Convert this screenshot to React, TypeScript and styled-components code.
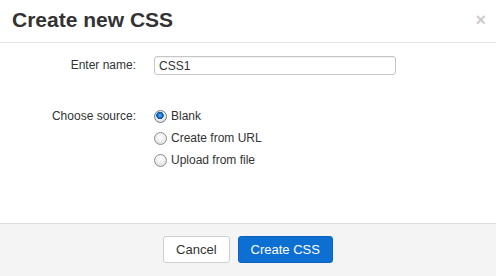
import React, { useState } from "react";
import { styled, createGlobalStyle } from "styled-components";

const GlobalStyle = createGlobalStyle`
  html, body {
    margin: 0;
    padding: 0;
    background: #fff;
  }
  body {
    font-family: "Liberation Sans", Arial, sans-serif;
    color: #333;
  }
`;

const Dialog = styled.div`
  width: 496px;
  height: 276px;
  display: flex;
  flex-direction: column;
  background: #fff;
`;

const Header = styled.div`
  height: 43px;
  padding: 0 10px 2px 12px;
  box-sizing: border-box;
  display: flex;
  align-items: center;
  justify-content: space-between;
  border-bottom: 1px solid #e5e5e5;
`;

const Title = styled.h3`
  margin: 0;
  font-size: 21px;
  font-weight: 700;
  color: #333;
`;

const Close = styled.button`
  border: 0;
  background: none;
  padding: 0;
  font-family: inherit;
  font-size: 18px;
  font-weight: 700;
  line-height: 1;
  color: #000;
  opacity: 0.2;
  cursor: pointer;
`;

const Body = styled.div`
  flex: 1;
  padding-top: 13px;
  display: grid;
  grid-template-columns: 136px 242px;
  column-gap: 18px;
  row-gap: 30px;
  align-content: start;
`;

const Label = styled.label<{ $top?: boolean }>`
  font-size: 12px;
  color: #333;
  text-align: right;
  line-height: ${(p) => (p.$top ? "22px" : "19px")};
`;

const TextInput = styled.input`
  box-sizing: border-box;
  width: 242px;
  height: 19px;
  margin: 0;
  padding: 0 4px;
  border: 1px solid #c6c6c6;
  border-radius: 3px;
  box-shadow: inset 0 1px 1px rgba(0, 0, 0, 0.06);
  font-family: inherit;
  font-size: 12px;
  color: #333;
  outline: none;
`;

const Options = styled.div`
  display: flex;
  flex-direction: column;
`;

const Option = styled.label`
  height: 22px;
  display: flex;
  align-items: center;
  gap: 4px;
  font-size: 12px;
  color: #333;
  cursor: pointer;
`;

const Radio = styled.input`
  appearance: none;
  -webkit-appearance: none;
  margin: 0;
  width: 13px;
  height: 13px;
  border-radius: 50%;
  border: 1px solid #8f8f8f;
  box-sizing: border-box;
  background: radial-gradient(circle at 50% 35%, #ffffff 0, #f2f2f2 40%, #d4d4d4 100%);
  &:checked {
    border-color: #6b7f96;
    background:
      radial-gradient(circle at 45% 40%, #5fb4f5 0, #1f7ad6 2px, #0b4f9e 3.5px, transparent 4px),
      radial-gradient(circle at 50% 35%, #ffffff 0, #f2f2f2 40%, #d4d4d4 100%);
  }
`;

const Footer = styled.div`
  height: 53px;
  box-sizing: border-box;
  border-top: 1px solid #dcdcdc;
  background: #f4f4f4;
  display: flex;
  align-items: center;
  justify-content: center;
  gap: 8px;
  padding-bottom: 1px;
`;

const Button = styled.button<{ $primary?: boolean }>`
  height: 27px;
  padding: 0 12px;
  border-radius: 3px;
  font-family: inherit;
  font-size: 13px;
  cursor: pointer;
  border: 1px solid ${(p) => (p.$primary ? "#0b63bd" : "#cfcfcf")};
  background: ${(p) => (p.$primary ? "#0d6fd1" : "#fff")};
  color: ${(p) => (p.$primary ? "#fff" : "#333")};
`;

const sources = ["Blank", "Create from URL", "Upload from file"];

export default function App() {
  const [name, setName] = useState("CSS1");
  const [source, setSource] = useState("Blank");

  return (
    <>
      <GlobalStyle />
      <Dialog>
        <Header>
          <Title>Create new CSS</Title>
          <Close aria-label="Close">×</Close>
        </Header>
        <Body>
          <Label htmlFor="css-name">Enter name:</Label>
          <TextInput id="css-name" value={name} onChange={(e) => setName(e.target.value)} />
          <Label $top>Choose source:</Label>
          <Options>
            {sources.map((s) => (
              <Option key={s}>
                <Radio
                  type="radio"
                  name="source"
                  checked={source === s}
                  onChange={() => setSource(s)}
                />
                {s}
              </Option>
            ))}
          </Options>
        </Body>
        <Footer>
          <Button>Cancel</Button>
          <Button $primary>Create CSS</Button>
        </Footer>
      </Dialog>
    </>
  );
}
